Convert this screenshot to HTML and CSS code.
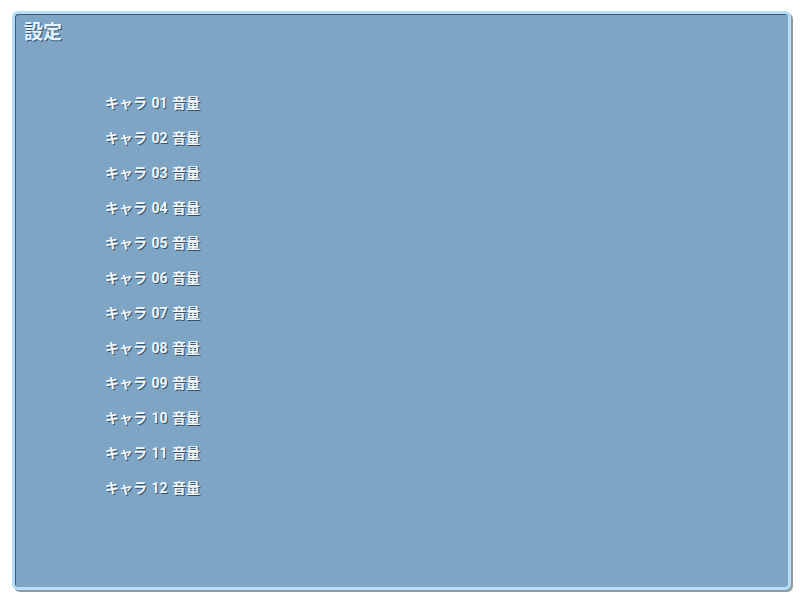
FILE: index.html
```html
<!DOCTYPE html>
<html lang="ja">
<head>
<meta charset="utf-8">
<title>設定</title>
<link rel="stylesheet" href="styles.css">
</head>
<body>
<div class="panel">
  <h1 class="title">設定</h1>
  <ul class="list">
    <li>キャラ 01 音量</li>
    <li>キャラ 02 音量</li>
    <li>キャラ 03 音量</li>
    <li>キャラ 04 音量</li>
    <li>キャラ 05 音量</li>
    <li>キャラ 06 音量</li>
    <li>キャラ 07 音量</li>
    <li>キャラ 08 音量</li>
    <li>キャラ 09 音量</li>
    <li>キャラ 10 音量</li>
    <li>キャラ 11 音量</li>
    <li>キャラ 12 音量</li>
  </ul>
</div>
</body>
</html>
```
FILE: styles.css
```css
html, body {
  margin: 0;
  padding: 0;
  background: #ffffff;
}
body {
  width: 800px;
  height: 600px;
  font-family: Roboto, "Noto Sans CJK JP", sans-serif;
}
.panel {
  box-sizing: border-box;
  margin: 11px 0 0 12px;
  width: 779px;
  height: 579px;
  background: #7ea5c4;
  border: 3px solid #b4defa;
  border-radius: 6px;
  box-shadow: inset 1px 1px 0 #3d5870, 2px 2px 0 #8f9aa3;
  padding: 7px 0 0 9px;
}
.title {
  margin: 0;
  font-size: 19px;
  line-height: 24px;
  font-weight: 700;
  color: #e4f3fd;
  text-shadow: 1px 1px 0 #34506a;
}
.list {
  list-style: none;
  margin: 41px 0 0 0;
  padding: 0 0 0 81px;
}
.list li {
  font-size: 14px;
  line-height: 35px;
  font-weight: 700;
  word-spacing: 1px;
  color: #f2f7fb;
  text-shadow: 1px 1px 0 #34506a;
}
```
